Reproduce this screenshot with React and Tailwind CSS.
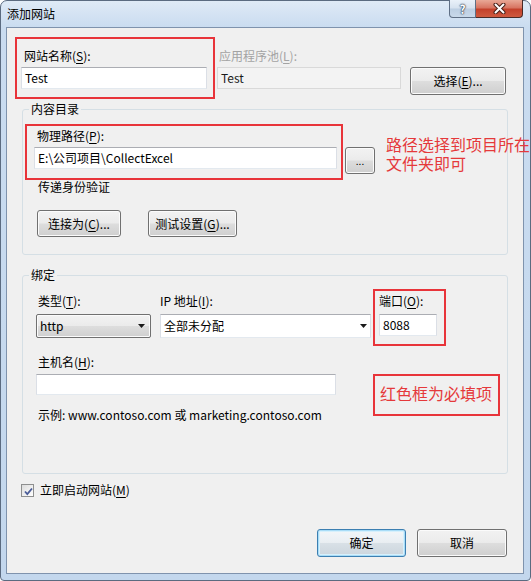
function K({ k }) {
  return <span className="underline underline-offset-[2px]">{k}</span>;
}

function TextBox({ className, children }) {
  return (
    <div
      className={`flex shrink-0 items-center bg-white pl-[3px] border border-[#dbdfe6] border-t-[#abadb3] border-b-[#e3e9ef] ${className}`}
    >
      {children}
    </div>
  );
}

function Btn({ className, children }) {
  return (
    <button
      type="button"
      className={`flex shrink-0 items-center justify-center rounded-[3px] border border-[#707070] bg-[linear-gradient(180deg,#f2f2f2_0%,#ebebeb_48%,#dddddd_52%,#cfcfcf_100%)] shadow-[inset_0_0_0_1px_#fbfbfb] ${className}`}
    >
      {children}
    </button>
  );
}

function Arrow() {
  return (
    <svg width="7" height="4" viewBox="0 0 7 4">
      <path d="M0 0h7L3.5 4z" fill="#1a1a1a" />
    </svg>
  );
}

function RedBox({ className, children }) {
  return <div className={`shrink-0 border-2 border-[#e8343a] ${className}`}>{children}</div>;
}

export default function App() {
  return (
    <div className="w-[531px] h-[581px] flex flex-col rounded-t-[7px] rounded-b-[4px] border border-[#5b6b80] bg-[linear-gradient(180deg,#dfeaf6_0px,#cadcf0_26px,#c3d7ed_100%)] pl-[5px] pr-[6px] pb-[6px] font-['Noto_Sans_CJK_SC',sans-serif] text-[12px] leading-[16px] text-black">
      {/* title bar */}
      <div className="h-[26px] flex items-start">
        <div className="pl-[1px] pt-[5px]">添加网站</div>
        <div className="ml-auto -mt-[1px] mr-[1px] flex">
          <div className="w-[27px] h-[18px] flex items-center justify-center rounded-bl-[4px] border border-t-0 border-[#5f6f85] bg-[linear-gradient(180deg,#eaf1f9_0%,#d6e2ef_48%,#bccee2_52%,#c9d9ea_100%)] text-[12px] leading-[12px] font-bold text-white [text-shadow:0_0_1px_#2d3b4f,0_0_1px_#2d3b4f,0_0_2px_#2d3b4f]">
            ?
          </div>
          <div className="w-[47px] h-[18px] flex items-center justify-center rounded-br-[4px] border border-l-0 border-t-0 border-[#4a2a26] bg-[linear-gradient(180deg,#e9a896_0%,#d87562_45%,#c4412b_55%,#cf5a3f_100%)]">
            <svg width="13" height="11" viewBox="0 0 13 11">
              <path d="M2.5 1.5l8 8M10.5 1.5l-8 8" stroke="#4a2018" strokeWidth="4" strokeLinecap="round" />
              <path d="M2.5 1.5l8 8M10.5 1.5l-8 8" stroke="#ffffff" strokeWidth="2" strokeLinecap="round" />
            </svg>
          </div>
        </div>
      </div>

      {/* client area */}
      <div className="flex-1 flex flex-col border border-[#7f93ad] bg-[#f0f0f0]">
        {/* site name / pool */}
        <div className="flex items-start mt-[9px] ml-[8px]">
          <RedBox className="w-[200px] h-[62px] pt-[9px] pl-[4px]">
            <div className="pl-[3px]">
              网站名称(<K k="S" />):
            </div>
            <TextBox className="mt-[3px] w-[186px] h-[22px]">Test</TextBox>
          </RedBox>
          <div className="ml-[2px] mt-[11px]">
            <div className="pl-[2px] text-[#a3a3a3]">
              应用程序池(<K k="L" />):
            </div>
            <div className="mt-[3px] w-[184px] h-[22px] flex items-center pl-[3px] border border-[#d9d9d9] bg-[#f3f3f3] text-[#1a1a1a]">
              Test
            </div>
          </div>
          <Btn className="ml-[9px] mt-[30px] w-[96px] h-[28px]">
            选择(<K k="E" />)...
          </Btn>
        </div>

        {/* content directory */}
        <fieldset className="min-w-0 ml-[15px] mt-[2px] w-[486px] rounded-[3px] border border-[#d5dfe5] pb-[17px]">
          <legend className="ml-[6px] px-[2px]">内容目录</legend>
          <div className="flex items-start mt-[7px] ml-[2px]">
            <RedBox className="w-[318px] h-[56px] pt-[2px] pl-[7px]">
              <div className="pl-[3px]">
                物理路径(<K k="P" />):
              </div>
              <TextBox className="mt-[3px] w-[303px] h-[22px]">E:\公司项目\CollectExcel</TextBox>
            </RedBox>
            <Btn className="ml-[2px] mt-[23px] w-[30px] h-[27px] text-[10px]">...</Btn>
            <div className="shrink-0 ml-[11px] mt-[11px] text-[16px] leading-[19px] text-[#e5393b] whitespace-nowrap">
              <div>路径选择到项目所在</div>
              <div>文件夹即可</div>
            </div>
          </div>
          <div className="ml-[15px] h-[14px] leading-[14px]">传递身份验证</div>
          <div className="flex ml-[14px] mt-[16px] gap-[27px]">
            <Btn className="w-[84px] h-[27px]">
              连接为(<K k="C" />)...
            </Btn>
            <Btn className="w-[89px] h-[27px]">
              测试设置(<K k="G" />)...
            </Btn>
          </div>
        </fieldset>

        {/* binding */}
        <fieldset className="min-w-0 ml-[15px] mt-[12px] w-[486px] rounded-[3px] border border-[#d5dfe5] pb-[50px]">
          <legend className="ml-[6px] px-[2px]">绑定</legend>
          <div className="flex items-start">
            <div className="ml-[13px] mt-[10px]">
              <div className="pl-[2px]">
                类型(<K k="T" />):
              </div>
              <div className="mt-[5px] w-[115px] h-[24px] flex items-center justify-between pl-[3px] pr-[5px] rounded-[2px] border border-[#707070] bg-[linear-gradient(180deg,#f2f2f2_0%,#ebebeb_48%,#dddddd_52%,#cfcfcf_100%)] shadow-[inset_0_0_0_1px_#fbfbfb]">
                <span>http</span>
                <Arrow />
              </div>
            </div>
            <div className="ml-[9px] mt-[10px]">
              <div>
                IP 地址(<K k="I" />):
              </div>
              <TextBox className="mt-[5px] w-[211px] h-[24px] justify-between pr-[3px]">
                <span>全部未分配</span>
                <Arrow />
              </TextBox>
            </div>
            <RedBox className="ml-[2px] mt-[6px] w-[73px] h-[57px] pt-[2px] pl-[4px]">
              <div>
                端口(<K k="O" />):
              </div>
              <TextBox className="mt-[5px] w-[58px] h-[22px]">8088</TextBox>
            </RedBox>
          </div>
          <div className="flex items-start mt-[8px]">
            <div className="ml-[13px]">
              <div className="pl-[2px]">
                主机名(<K k="H" />):
              </div>
              <TextBox className="mt-[4px] w-[300px] h-[21px]" />
              <div className="mt-[12px] pl-[2px] whitespace-nowrap">
                示例: www.contoso.com 或 marketing.contoso.com
              </div>
            </div>
            <RedBox className="ml-[37px] mt-[20px] w-[127px] h-[42px] pt-[7px] pl-[5px] text-[16px] leading-[20px] text-[#e5393b] whitespace-nowrap">
              红色框为必填项
            </RedBox>
          </div>
        </fieldset>

        {/* start now */}
        <div className="flex items-center mt-[8px] ml-[14px]">
          <div className="w-[13px] h-[13px] border border-[#8e8f8f] bg-[linear-gradient(135deg,#dcdcdc,#ffffff)] p-[1px]">
            <svg width="11" height="11" viewBox="0 0 11 11">
              <path d="M2 5.5l2.3 2.6L9 2.5" fill="none" stroke="#4a5c98" strokeWidth="1.8" />
            </svg>
          </div>
          <div className="ml-[6px]">
            立即启动网站(<K k="M" />)
          </div>
        </div>

        {/* dialog buttons */}
        <div className="flex justify-end mt-[31px] mr-[16px] gap-[11px]">
          <button
            type="button"
            className="w-[89px] h-[28px] flex items-center justify-center rounded-[3px] border border-[#3c7fb1] bg-[linear-gradient(180deg,#f2f6f9_0%,#e9eef2_48%,#d8e0e6_52%,#cbd5dd_100%)] shadow-[inset_0_0_0_1px_#a8dcf7,inset_0_0_0_2px_#d6f0fc]"
          >
            确定
          </button>
          <Btn className="w-[90px] h-[28px]">取消</Btn>
        </div>
      </div>
    </div>
  );
}
